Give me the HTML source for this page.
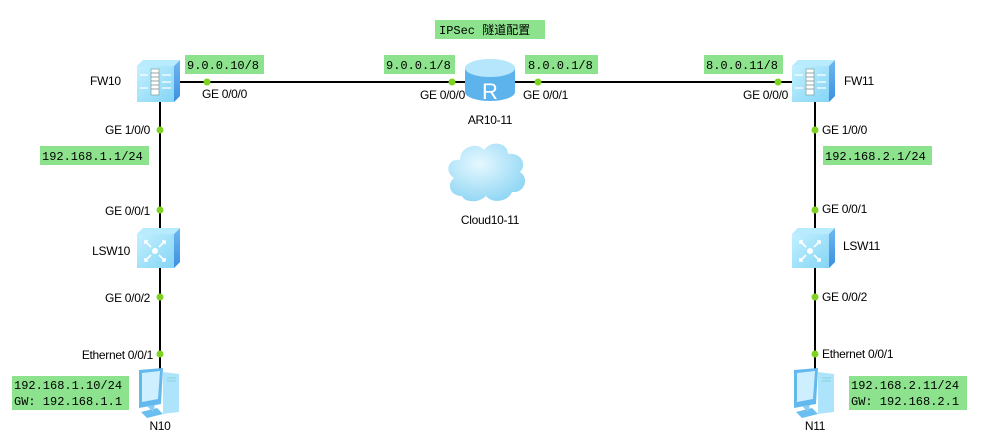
<!DOCTYPE html>
<html><head><meta charset="utf-8"><style>
html,body{margin:0;padding:0;background:#fff;}
svg{display:block}
.t{font-family:"Liberation Sans",Arial,sans-serif;font-size:12px;fill:#000;letter-spacing:-0.3px}
.m{font-family:"Liberation Mono","Noto Sans CJK SC",monospace;font-size:12px;fill:#000}
.g{fill:#8de38d}
</style></head><body>
<svg width="983" height="447" viewBox="0 0 983 447" xmlns="http://www.w3.org/2000/svg">
<defs>
<linearGradient id="bf" x1="0" y1="0" x2="1" y2="1"><stop offset="0" stop-color="#c8f2ff"/><stop offset="1" stop-color="#7fd3f5"/></linearGradient>
<linearGradient id="bs" x1="0" y1="0" x2="0" y2="1"><stop offset="0" stop-color="#6fb8f0"/><stop offset="1" stop-color="#3c8fe0"/></linearGradient>
<radialGradient id="cl" cx="0.4" cy="0.35" r="0.7"><stop offset="0" stop-color="#e6f8ff"/><stop offset="1" stop-color="#8fd6f4"/></radialGradient>
<g id="fw">
<path d="M0 6 L6 0 L43 0 L43 36 L37 42 L0 42 Z" fill="url(#bf)"/>
<path d="M37 6 L43 0 L43 36 L37 42 Z" fill="url(#bs)"/>
<path d="M0 6 L6 0 L43 0 L37 6 Z" fill="#b9ebff"/>
<rect x="14" y="9" width="8" height="26" fill="#fff" stroke="#8aa" stroke-width="0.8"/>
<path d="M14 13h8M14 17h8M14 21h8M14 25h8M14 29h8" stroke="#788" stroke-width="0.8"/>
<path d="M3 15h8M3 28h8M25 15h9M25 22h9M25 28h9" stroke="#fff" stroke-width="1.2"/>
</g>
<g id="sw">
<path d="M0 6 L6 0 L43 0 L43 34 L37 40 L0 40 Z" fill="url(#bf)"/>
<path d="M37 6 L43 0 L43 34 L37 40 Z" fill="url(#bs)"/>
<path d="M0 6 L6 0 L43 0 L37 6 Z" fill="#b9ebff"/>
<circle cx="18" cy="23" r="3" fill="#fff"/>
<path d="M8 13l6 6M28 13l-6 6M8 33l6-6M28 33l-6-6M8 16v-3h3M28 16v-3h-3M8 30v3h3M28 30v3h-3" stroke="#fff" stroke-width="1.6" fill="none"/>
</g>
<g id="pc">
<path d="M30 4 L46 6 L46 44 L30 46 Z" fill="#aee4fb"/>
<path d="M34 10h9M34 13h9" stroke="#7cc" stroke-width="0.8"/>
<path d="M6 2 L30 0 L28 36 L6 40 Z" fill="#63b9ee"/>
<path d="M9 5 L27 3 L25 31 L9 34 Z" fill="#cdefff"/>
<path d="M8 44 L24 40 L30 46 L14 50 Z" fill="#6bbff0"/>
<path d="M14 38 L22 37 L20 44 Z" fill="#88ccf2"/>
</g>
</defs>
<path d="M178 82H792M160 100V372M815 100V372" stroke="#000" stroke-width="2" fill="none"/>
<g fill="#7ed321">
<circle cx="207" cy="82" r="3.5"/><circle cx="160" cy="130" r="3.5"/><circle cx="160" cy="210" r="3.5"/><circle cx="160" cy="297" r="3.5"/><circle cx="160" cy="354" r="3.5"/>
<circle cx="452" cy="82" r="3.5"/><circle cx="538" cy="82" r="3.5"/>
<circle cx="778" cy="82" r="3.5"/><circle cx="815" cy="130" r="3.5"/><circle cx="815" cy="210" r="3.5"/><circle cx="815" cy="297" r="3.5"/><circle cx="815" cy="354" r="3.5"/>
</g>
<use href="#fw" x="137" y="60"/>
<use href="#fw" x="792" y="60"/>
<use href="#sw" x="137" y="228"/>
<use href="#sw" x="792" y="228"/>
<use href="#pc" x="133" y="368"/>
<use href="#pc" x="788" y="368"/>
<path d="M465 68 v24 a25 9 0 0 0 50 0 v-24 z" fill="#5db4ec"/>
<ellipse cx="490" cy="68" rx="25" ry="9" fill="#b6e6fb"/>
<text x="490" y="99" text-anchor="middle" style="font-family:'Liberation Sans',sans-serif;font-size:22px;fill:#fff">R</text>
<path d="M462 196 c-12 0 -16 -12 -8 -18 c-10 -6 -6 -20 6 -18 c0 -14 18 -18 24 -10 c6 -10 24 -8 24 4 c12 -2 20 10 12 18 c10 6 4 22 -8 20 c-4 10 -20 12 -26 4 c-8 8 -22 6 -24 0 z" fill="url(#cl)"/>
<rect class="g" x="435" y="20" width="110" height="19"/><text class="m" x="439" y="34">IPSec 隧道配置</text>
<rect class="g" x="185" y="55" width="79" height="19"/><text class="m" x="187" y="69">9.0.0.10/8</text>
<rect class="g" x="384" y="55" width="71" height="19"/><text class="m" x="386" y="69">9.0.0.1/8</text>
<rect class="g" x="525" y="55" width="73" height="19"/><text class="m" x="528" y="69">8.0.0.1/8</text>
<rect class="g" x="704" y="55" width="79" height="19"/><text class="m" x="706" y="69">8.0.0.11/8</text>
<rect class="g" x="40" y="146" width="109" height="19"/><text class="m" x="42" y="160">192.168.1.1/24</text>
<rect class="g" x="823" y="146" width="109" height="19"/><text class="m" x="825" y="160">192.168.2.1/24</text>
<rect class="g" x="12" y="376" width="117" height="34"/><text class="m" x="14" y="389">192.168.1.10/24</text><text class="m" x="14" y="405">GW: 192.168.1.1</text>
<rect class="g" x="849" y="376" width="118" height="34"/><text class="m" x="851" y="389">192.168.2.11/24</text><text class="m" x="851" y="405">GW: 192.168.2.1</text>
<text class="t" x="90" y="85">FW10</text>
<text class="t" x="202" y="98">GE 0/0/0</text>
<text class="t" x="150" y="134" text-anchor="end">GE 1/0/0</text>
<text class="t" x="150" y="215" text-anchor="end">GE 0/0/1</text>
<text class="t" x="130" y="255" text-anchor="end">LSW10</text>
<text class="t" x="150" y="302" text-anchor="end">GE 0/0/2</text>
<text class="t" x="153" y="359" text-anchor="end">Ethernet 0/0/1</text>
<text class="t" x="160" y="430" text-anchor="middle">N10</text>
<text class="t" x="420" y="99">GE 0/0/0</text>
<text class="t" x="523" y="99">GE 0/0/1</text>
<text class="t" x="490" y="124" text-anchor="middle">AR10-11</text>
<text class="t" x="490" y="224" text-anchor="middle">Cloud10-11</text>
<text class="t" x="788" y="99" text-anchor="end">GE 0/0/0</text>
<text class="t" x="844" y="85">FW11</text>
<text class="t" x="822" y="134">GE 1/0/0</text>
<text class="t" x="822" y="213">GE 0/0/1</text>
<text class="t" x="843" y="250">LSW11</text>
<text class="t" x="822" y="301">GE 0/0/2</text>
<text class="t" x="822" y="358">Ethernet 0/0/1</text>
<text class="t" x="815" y="430" text-anchor="middle">N11</text>
</svg>
</body></html>
